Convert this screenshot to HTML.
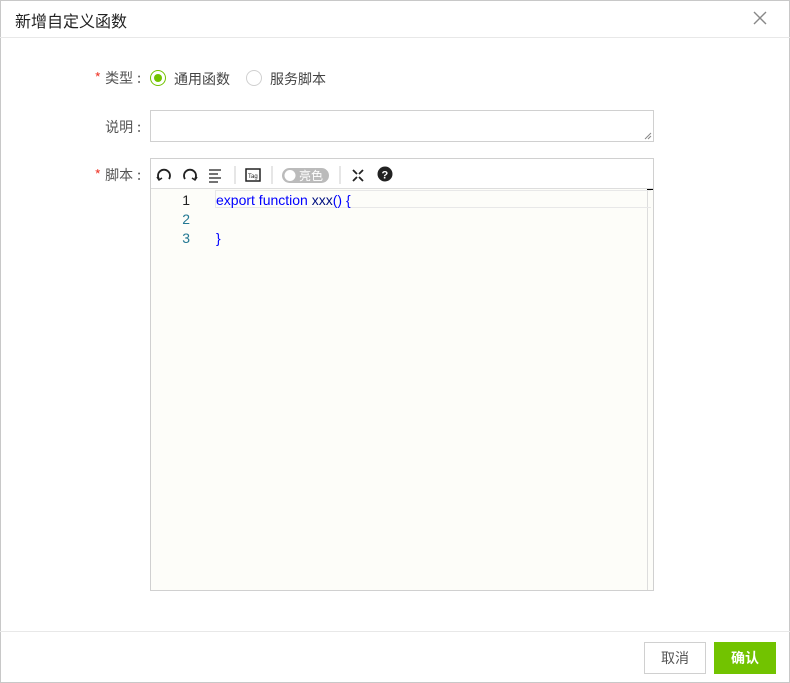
<!DOCTYPE html>
<html><head><meta charset="utf-8"><style>
*{box-sizing:border-box;margin:0;padding:0}
body{width:790px;height:683px;background:#fff;font-family:"Liberation Sans","Noto Sans CJK SC",sans-serif;font-size:14px;color:#333;position:relative;overflow:hidden}
.frame{position:absolute;left:0;top:0;width:790px;height:683px;border:1px solid #c8c8c8}
.hd{position:absolute;left:0;top:0;width:790px;height:38px;border-bottom:1px solid #e8e8e8}
.hd .t{position:absolute;left:15px;top:8px;font-size:16px;color:#222}
.ab{position:absolute}
.lbl{position:absolute;font-size:14px;color:#555;text-align:right;width:82px;font-family:"Noto Sans CJK SC",sans-serif}
.lbl i{font-style:normal;margin-left:4px}
.star{color:#f04134;margin-right:4px}
.ft{position:absolute;left:0;top:631px;width:790px;border-top:1px solid #e8e8e8}
.btn{position:absolute;top:642px;height:32px;font-size:14px;text-align:center;line-height:30px}
</style></head><body>
<div class="frame"></div>
<div class="hd"><div class="t">新增自定义函数</div>
<svg class="ab" style="left:752px;top:10px" width="16" height="16"><path d="M2 2L14 14M14 2L2 14" stroke="#888" stroke-width="1.4"/></svg></div>
<div class="lbl" style="left:59px;top:68px"><span class="star">*</span>类型<i>:</i></div>
<div class="ab" style="left:150px;top:70px;width:16px;height:16px;border:1px solid #72c300;border-radius:50%"><div style="position:absolute;left:3px;top:3px;width:8px;height:8px;border-radius:50%;background:#72c300"></div></div>
<div class="ab" style="left:174px;top:69px;color:#444">通用函数</div>
<div class="ab" style="left:246px;top:70px;width:16px;height:16px;border:1px solid #d0d0d0;border-radius:50%"></div>
<div class="ab" style="left:270px;top:69px;color:#444">服务脚本</div>
<div class="lbl" style="left:59px;top:117px">说明<i>:</i></div>
<div class="ab" style="left:150px;top:110px;width:504px;height:32px;border:1px solid #d0d0d0"></div>
<svg class="ab" style="left:644px;top:132px" width="8" height="8"><path d="M1 7L7 1M4 7L7 4" stroke="#888"/></svg>
<div class="lbl" style="left:59px;top:165px"><span class="star">*</span>脚本<i>:</i></div>
<div class="ab" style="left:150px;top:158px;width:504px;height:433px;border:1px solid #d0d0d0;background:#fdfdf9">
 <div style="position:absolute;left:0;top:0;width:502px;height:30px;background:#fff;border-bottom:1px solid #ddd"></div>
 <svg style="position:absolute;left:5px;top:7px" width="240" height="18">
  <path d="M3 13A6 6 0 1 1 13 13" fill="none" stroke="#222" stroke-width="1.8"/><path d="M1 11L3 14L6 12" fill="none" stroke="#222" stroke-width="1.5"/>
  <path d="M29 13A6 6 0 1 1 39 13" fill="none" stroke="#222" stroke-width="1.8"/><path d="M41 11L39 14L36 12" fill="none" stroke="#222" stroke-width="1.5"/>
  <path d="M53 4H65M53 8H62M53 12H65M53 16H62" stroke="#222" stroke-width="1.3"/>
  <path d="M79 0V18" stroke="#ccc"/>
  <rect x="90" y="3" width="14" height="12" fill="none" stroke="#222" stroke-width="1.5"/><text x="92" y="12" font-size="6" font-family="Liberation Sans" fill="#222">Tag</text>
  <path d="M116 0V18" stroke="#ccc"/>
  <rect x="126" y="2" width="47" height="15" rx="7.5" fill="#bbb"/><circle cx="134" cy="9.5" r="5.5" fill="#fff"/>
  <text x="143" y="14" font-size="12" fill="#fff" font-family="Noto Sans CJK SC">亮色</text>
  <path d="M184 0V18" stroke="#ccc"/>
  <path d="M197 4L201 8M207 4L203 8M197 15L201 11M207 15L203 11" stroke="#222" stroke-width="1.8"/>
  <circle cx="229" cy="8" r="7.5" fill="#222"/><text x="225.5" y="12.5" font-size="11" font-weight="bold" fill="#fff" font-family="Liberation Sans">?</text>
 </svg>
 <div style="position:absolute;left:496px;top:30px;width:6px;height:1px;background:#000"></div>
 <div style="position:absolute;left:496px;top:32px;width:1px;height:399px;background:#ddd"></div>
 <div style="position:absolute;left:64px;top:31px;width:436px;height:18px;border:1px solid #e8e8e8;border-right:none"></div>
 <div style="position:absolute;left:19px;top:32px;width:20px;text-align:right;line-height:19px;font-size:14px">
  <div style="color:#222">1</div><div style="color:#237893">2</div><div style="color:#237893">3</div></div>
 <div style="position:absolute;left:65px;top:32px;line-height:19px;font-size:14px;color:#00f">
  <div>export function <span style="color:#001080">xxx</span>() {</div><div>&nbsp;</div><div>}</div></div>
</div>
<div class="ft"></div>
<div class="btn" style="left:644px;width:62px;border:1px solid #d0d0d0;color:#555">取消</div>
<div class="btn" style="left:714px;width:62px;background:#72c300;color:#fff;font-weight:bold;line-height:32px">确认</div>
</body></html>
